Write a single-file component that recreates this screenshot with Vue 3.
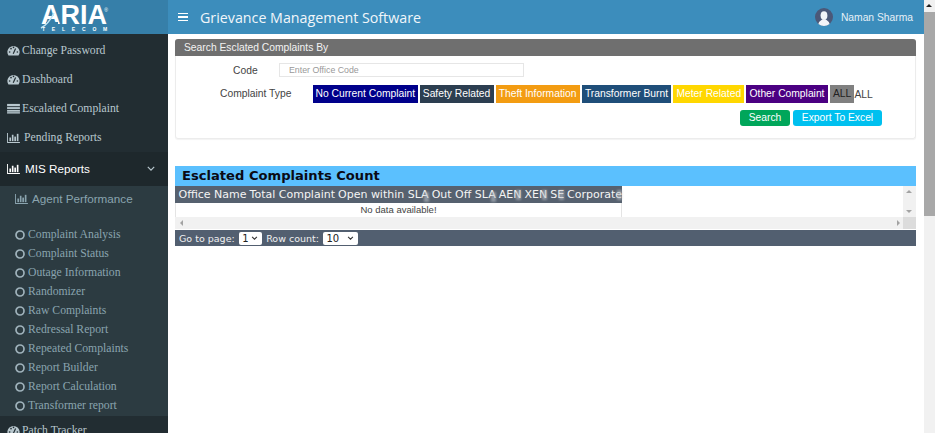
<template>
  <div class="page">
    <div class="layout">
      <header class="topbar">
        <div class="logo">
          <div class="logo-mark">
            <span class="logo-word">ARIA</span>
            <svg class="logo-swoosh" viewBox="0 0 24 22">
              <path d="M6 14h12v3H6z" fill="#367fa9" />
              <path d="M1 20C7 17 11 11 14 5" fill="none" stroke="#bfe6f6" stroke-width="1.500" />
            </svg>
            <span class="logo-reg">®</span>
            <span class="logo-sub">TELECOM</span>
          </div>
        </div>
        <div class="topnav">
          <div class="burger"><i></i><i></i><i></i></div>
          <span class="app-title">Grievance Management Software</span>
          <div class="user">
            <svg class="avatar" viewBox="0 0 18 18">
              <circle cx="9" cy="9" r="9" fill="#4b5878" />
              <ellipse cx="9" cy="7.6" rx="3.4" ry="4.4" fill="#f2f4f8" />
              <path d="M3.4 16c.6-3 3-3.6 4-4.4h3.200c1 .8 3.400 1.400 4 4.400a9 9 0 0 1-11.200 0z" fill="#f2f4f8" />
            </svg>
            <span>Naman Sharma</span>
          </div>
        </div>
      </header>

      <div class="body-row">
        <aside class="sidebar">
          <a v-for="item in topMenu" :key="item.label" class="menu-item">
            <MenuIcon :type="item.icon" />
            <span>{{ item.label }}</span>
          </a>

          <a class="menu-item open">
            <MenuIcon type="chart" />
            <span>MIS Reports</span>
            <svg class="chev" viewBox="0 0 10 6"><path d="M1 1l4 4 4-4" fill="none" stroke="#b8c7ce" stroke-width="1.500" /></svg>
          </a>

          <div class="submenu">
            <a class="sub-head">
              <MenuIcon type="chart" />
              <span>Agent Performance</span>
            </a>
            <a v-for="label in reports" :key="label" class="sub-item">
              <svg class="ring" viewBox="0 0 10 10"><circle cx="5" cy="5" r="4" fill="none" stroke="#9fb2bb" stroke-width="1.700" /></svg>
              <span>{{ label }}</span>
            </a>
          </div>

          <a class="menu-item">
            <MenuIcon type="gauge" />
            <span>Patch Tracker</span>
          </a>
        </aside>

        <main class="content">
          <section class="search-panel">
            <div class="panel-head">Search Esclated Complaints By</div>
            <div class="panel-body">
              <div class="code-row">
                <label class="code-label">Code</label>
                <input class="code-input" type="text" placeholder="Enter Office Code" />
              </div>
              <div class="type-row">
                <span class="type-label">Complaint Type</span>
                <div class="tags">
                  <span v-for="tag in tags" :key="tag.label" class="tag" :class="tag.cls">{{ tag.label }}</span>
                  <span class="tag-plain">ALL</span>
                </div>
              </div>
              <div class="actions">
                <button class="btn btn-search">Search</button>
                <button class="btn btn-export">Export To Excel</button>
              </div>
            </div>
          </section>

          <section class="count-section">
            <h2 class="count-title">Esclated Complaints Count</h2>
            <div class="grid-wrap">
              <div class="grid-scroll">
                <div class="grid-table">
                  <div class="grid-head">
                    <span>Office Name</span>
                    <span>Total Complaint</span>
                    <span>Open within <b class="sorted">SLA</b></span>
                    <span>Out Off <b class="sorted">SLA</b></span>
                    <span class="sorted">AEN</span>
                    <span class="sorted">XEN</span>
                    <span class="sorted">SE</span>
                    <span class="sorted">Corporate</span>
                  </div>
                  <div class="grid-empty">No data available!</div>
                </div>
              </div>
              <div class="v-bar">
                <i class="arrow up"></i>
                <i class="arrow down"></i>
              </div>
              <div class="h-bar">
                <i class="arrow left"></i>
                <i class="arrow right"></i>
              </div>
              <div class="corner"></div>
            </div>
            <div class="pager">
              <label>Go to page:</label>
              <select class="pager-select"><option>1</option></select>
              <label>Row count:</label>
              <select class="pager-select wide"><option>10</option><option>25</option></select>
            </div>
          </section>
        </main>
      </div>
    </div>

    <div class="page-scroll">
      <i class="arrow up dark"></i>
      <div class="page-thumb"></div>
    </div>
  </div>
</template>

<script setup>
import { h } from 'vue'

// font-awesome 风格的小图标
const iconShapes = {
  gauge: [
    h('path', { d: 'M1.500 11.500A6.700 6.700 0 1 1 12.500 11.500Z' }),
    h('path', { d: 'M6.700 9.500L9.300 3.800', stroke: '#222d32', 'stroke-width': 1.300 }),
    h('circle', { cx: 2.800, cy: 7.600, r: 0.900, fill: '#222d32' }),
    h('circle', { cx: 4.300, cy: 4, r: 0.900, fill: '#222d32' }),
    h('circle', { cx: 7, cy: 2.600, r: 0.900, fill: '#222d32' }),
    h('circle', { cx: 11.200, cy: 7.600, r: 0.900, fill: '#222d32' })
  ],
  table: [
    h('rect', { x: 0, y: 1, width: 14, height: 2.500 }),
    h('rect', { x: 0, y: 4.500, width: 14, height: 2 }),
    h('rect', { x: 0, y: 7.500, width: 14, height: 2 }),
    h('rect', { x: 0, y: 10, width: 14, height: 1.500 })
  ],
  chart: [
    h('path', { d: 'M0 1h1v10h13v1H0z' }),
    h('rect', { x: 2.500, y: 6, width: 1.800, height: 4 }),
    h('rect', { x: 5.200, y: 3, width: 1.800, height: 7 }),
    h('rect', { x: 7.900, y: 5, width: 1.800, height: 5 }),
    h('rect', { x: 10.600, y: 2, width: 1.800, height: 8 })
  ]
}

const MenuIcon = (props) =>
  h('svg', { class: ['menu-icon', props.type], viewBox: '0 0 14 12', fill: 'currentColor' }, iconShapes[props.type])
MenuIcon.props = ['type']

const topMenu = [
  { label: 'Change Password', icon: 'gauge' },
  { label: 'Dashboard', icon: 'gauge' },
  { label: 'Escalated Complaint', icon: 'table' },
  { label: 'Pending Reports', icon: 'chart' }
]

const reports = [
  'Complaint Analysis',
  'Complaint Status',
  'Outage Information',
  'Randomizer',
  'Raw Complaints',
  'Redressal Report',
  'Repeated Complaints',
  'Report Builder',
  'Report Calculation',
  'Transformer report'
]

const tags = [
  { label: 'No Current Complaint', cls: 'navy' },
  { label: 'Safety Related', cls: 'slate' },
  { label: 'Theft Information', cls: 'orange' },
  { label: 'Transformer Burnt', cls: 'steel' },
  { label: 'Meter Related', cls: 'gold' },
  { label: 'Other Complaint', cls: 'purple' },
  { label: 'ALL', cls: 'grey' }
]
</script>

<style>
html, body {
  margin: 0;
  height: 100%;
  overflow: hidden;
  background: #fff;
}
.menu-icon {
  width: 13px;
  height: 11px;
  flex: none;
}
.menu-icon.chart {
  margin-right: 2px;
}
</style>

<style scoped>
.page {
  display: flex;
  height: 433px;
  overflow: hidden;
  font-family: 'Liberation Sans', Arial, sans-serif;
  color: #333;
}

.layout {
  flex: 1;
  min-width: 0;
  display: flex;
  flex-direction: column;
}

/* 顶部栏 */
.topbar {
  display: flex;
  height: 34px;
  flex: none;
  background: #3c8dbc;
}

.logo {
  width: 168px;
  flex: none;
  box-sizing: border-box;
  padding-left: 41px;
  background: #367fa9;
}

.logo-mark {
  position: relative;
  width: 66px;
  color: #fff;
}

.logo-word {
  display: block;
  font-size: 27px;
  font-weight: bold;
  line-height: 22px;
  margin-top: 4px;
}

.logo-swoosh {
  position: absolute;
  left: -1px;
  top: 4px;
  width: 24px;
  height: 22px;
}

.logo-reg {
  position: absolute;
  top: 3px;
  right: -1px;
  font-size: 5px;
  line-height: 6px;
}

.logo-sub {
  display: block;
  margin: 1px 0 0 1px;
  font-size: 5px;
  line-height: 5px;
  font-weight: bold;
  letter-spacing: 6.800px;
  white-space: nowrap;
}

.topnav {
  flex: 1;
  display: flex;
  align-items: center;
  padding: 0 11px 0 10px;
  color: #fff;
}

.burger {
  width: 10px;
  display: flex;
  flex-direction: column;
  gap: 2px;
  margin-right: 12px;
}

.burger i {
  height: 1.500px;
  background: #fff;
}

.app-title {
  font-family: 'Open Sans', sans-serif;
  font-size: 14.250px;
  color: #f1f6fa;
}

.user {
  margin-left: auto;
  display: flex;
  align-items: center;
  gap: 8px;
  font-size: 10.300px;
  color: #e6f0f7;
}

.avatar {
  width: 18px;
  height: 18px;
}

.body-row {
  flex: 1;
  display: flex;
  min-height: 0;
}

/* 左侧菜单 */
.sidebar {
  width: 168px;
  flex: none;
  background: #222d32;
  color: #b8c7ce;
  font-family: 'Liberation Serif', serif;
  font-size: 11.700px;
  padding-top: 2px;
  overflow: hidden;
}

.menu-item {
  display: flex;
  align-items: center;
  gap: 2px;
  height: 29px;
  padding-left: 7px;
}

.menu-item.open {
  height: 34px;
  box-sizing: border-box;
  padding-bottom: 2px;
  background: #1e282c;
  color: #fff;
  font-family: 'Liberation Sans', sans-serif;
  gap: 3px;
}

.chev {
  width: 8px;
  height: 5px;
  margin-left: auto;
  margin-right: 13px;
}

.submenu {
  background: #2c3b41;
  color: #8aa4af;
  padding-bottom: 1px;
}

.sub-head {
  display: flex;
  align-items: center;
  gap: 2px;
  height: 24px;
  padding-left: 15px;
  margin-bottom: 15px;
  font-family: 'Liberation Sans', sans-serif;
}

.sub-item {
  display: flex;
  align-items: center;
  gap: 3px;
  height: 19px;
  padding-left: 15px;
}

.ring {
  width: 10px;
  height: 10px;
  flex: none;
}

/* 主内容 */
.content {
  flex: 1;
  min-width: 0;
  padding: 5px 8px 0 7px;
}

.search-panel {
  border: 1px solid #ececec;
  border-top: 0;
  border-radius: 3px;
  height: 100px;
  box-sizing: border-box;
  box-shadow: 0 1px 1px rgba(0, 0, 0, 0.05);
}

.panel-head {
  background: #6f6f6f;
  color: #f2f2f2;
  font-size: 10.300px;
  line-height: 17px;
  padding-left: 9px;
  border-radius: 3px 3px 0 0;
  margin: 0 -1px;
}

.panel-body {
  padding-top: 7px;
}

.code-row {
  display: flex;
  align-items: center;
  height: 13px;
  font-size: 10.300px;
}

.code-label {
  margin-left: 57px;
  width: 46px;
  padding-top: 1px;
  color: #444;
}

.code-input {
  width: 245px;
  height: 14px;
  box-sizing: border-box;
  border: 1px solid #e6e6e6;
  padding: 0 9px;
  font-family: inherit;
  font-size: 8.800px;
  outline: none;
}

.code-input::placeholder {
  color: #999;
}

.type-row {
  display: flex;
  margin-top: 9px;
}

.type-label {
  margin-left: 44px;
  width: 93px;
  padding-top: 2px;
  font-size: 10.300px;
  line-height: 14px;
  color: #444;
}

.tags {
  display: flex;
  align-items: center;
  gap: 2px;
}

.tag {
  display: block;
  height: 18px;
  line-height: 18px;
  padding: 0 3.200px;
  font-size: 10.300px;
  color: #fff;
  box-sizing: border-box;
  white-space: nowrap;
}

.navy { background: #00008b; padding: 0 2.500px; }
.slate { background: #2c3e50; }
.orange { background: #f39c12; }
.steel { background: #1f4e79; }
.gold { background: #ffd700; }
.purple { background: #4b0082; }
.grey { background: #808080; color: #222; }

.tag-plain {
  font-size: 10.300px;
  margin-left: -2px;
  color: #444;
}

.actions {
  display: flex;
  justify-content: flex-end;
  gap: 3px;
  margin: 7px 33px 0 0;
}

.btn {
  height: 16px;
  border: 0;
  border-radius: 3px;
  padding: 0;
  color: #fff;
  font-family: inherit;
  font-size: 10.300px;
  line-height: 16px;
}

.btn-search {
  width: 50px;
  background: #00a65a;
}

.btn-export {
  width: 89px;
  background: #00c0ef;
}

.count-section {
  margin-top: 27px;
}

.count-title {
  margin: 0;
  height: 20px;
  background: #5bc0fe;
  padding-left: 7px;
  color: #0a0a14;
  font-family: 'DejaVu Sans', Verdana, sans-serif;
  font-size: 13.100px;
  font-weight: bold;
  line-height: 20px;
}

/* 表格 + 滚动条 */
.grid-wrap {
  display: grid;
  grid-template-columns: 1fr 13px;
  grid-template-rows: 31px 12px;
}

.grid-table {
  width: 447px;
}

.grid-head {
  display: flex;
  gap: 3px;
  height: 17px;
  padding-left: 3.500px;
  background: #56616f;
  color: #f4f4f4;
  font-family: 'DejaVu Sans', Verdana, sans-serif;
  font-size: 11px;
  line-height: 17px;
  white-space: nowrap;
}

.grid-head b {
  font-weight: normal;
}

.sorted {
  position: relative;
}

.sorted::after {
  content: '';
  position: absolute;
  right: 0;
  top: 4px;
  width: 5px;
  height: 10px;
  background: rgba(190, 195, 200, 0.55);
  filter: blur(1px);
}

.grid-empty {
  height: 14px;
  border: 1px solid #e4e4e4;
  border-top: 0;
  box-sizing: content-box;
  text-align: center;
  font-size: 9.500px;
  line-height: 14px;
  color: #444;
}

.v-bar {
  background: #f1f1f1;
  position: relative;
}

.h-bar {
  background: #f1f1f1;
  position: relative;
}

.corner {
  background: #dcdcdc;
}

.arrow {
  position: absolute;
  width: 0;
  height: 0;
  border: 3px solid transparent;
}

.arrow.up {
  top: 4px;
  left: 3px;
  border-top: 0;
  border-bottom-color: #a3a3a3;
}

.arrow.down {
  bottom: 4px;
  left: 3px;
  border-bottom: 0;
  border-top-color: #a3a3a3;
}

.arrow.left {
  left: 5px;
  top: 3px;
  border-left: 0;
  border-right-color: #a3a3a3;
}

.arrow.right {
  right: 3px;
  top: 3px;
  border-right: 0;
  border-left-color: #a3a3a3;
}

.pager {
  display: flex;
  align-items: center;
  height: 16px;
  margin-top: 1px;
  padding-left: 4px;
  gap: 4.500px;
  background: #525f70;
  color: #f0f0f0;
  font-family: 'DejaVu Sans', Verdana, sans-serif;
  font-size: 9.500px;
}

.pager-select {
  appearance: none;
  width: 22.500px;
  height: 13px;
  padding: 0 0 0 3px;
  border: 0;
  border-radius: 2px;
  background: #fff url("data:image/svg+xml,%3Csvg xmlns='http://www.w3.org/2000/svg' viewBox='0 0 8 5'%3E%3Cpath d='M1 1l3 3 3-3' fill='none' stroke='%23333' stroke-width='1.300'/%3E%3C/svg%3E") no-repeat right 4px center / 7px 4px;
  color: #222;
  font-family: inherit;
  font-size: 10px;
}

.pager-select.wide {
  width: 34.500px;
}

/* 页面滚动条 */
.page-scroll {
  position: relative;
  width: 11px;
  flex: none;
  background: #f1f1f1;
  padding-top: 12px;
  box-sizing: border-box;
}

.arrow.dark {
  left: 2px;
  top: 4px;
  border-bottom-color: #222;
}

.page-thumb {
  height: 204px;
  background: #a8a8a8;
}
</style>
